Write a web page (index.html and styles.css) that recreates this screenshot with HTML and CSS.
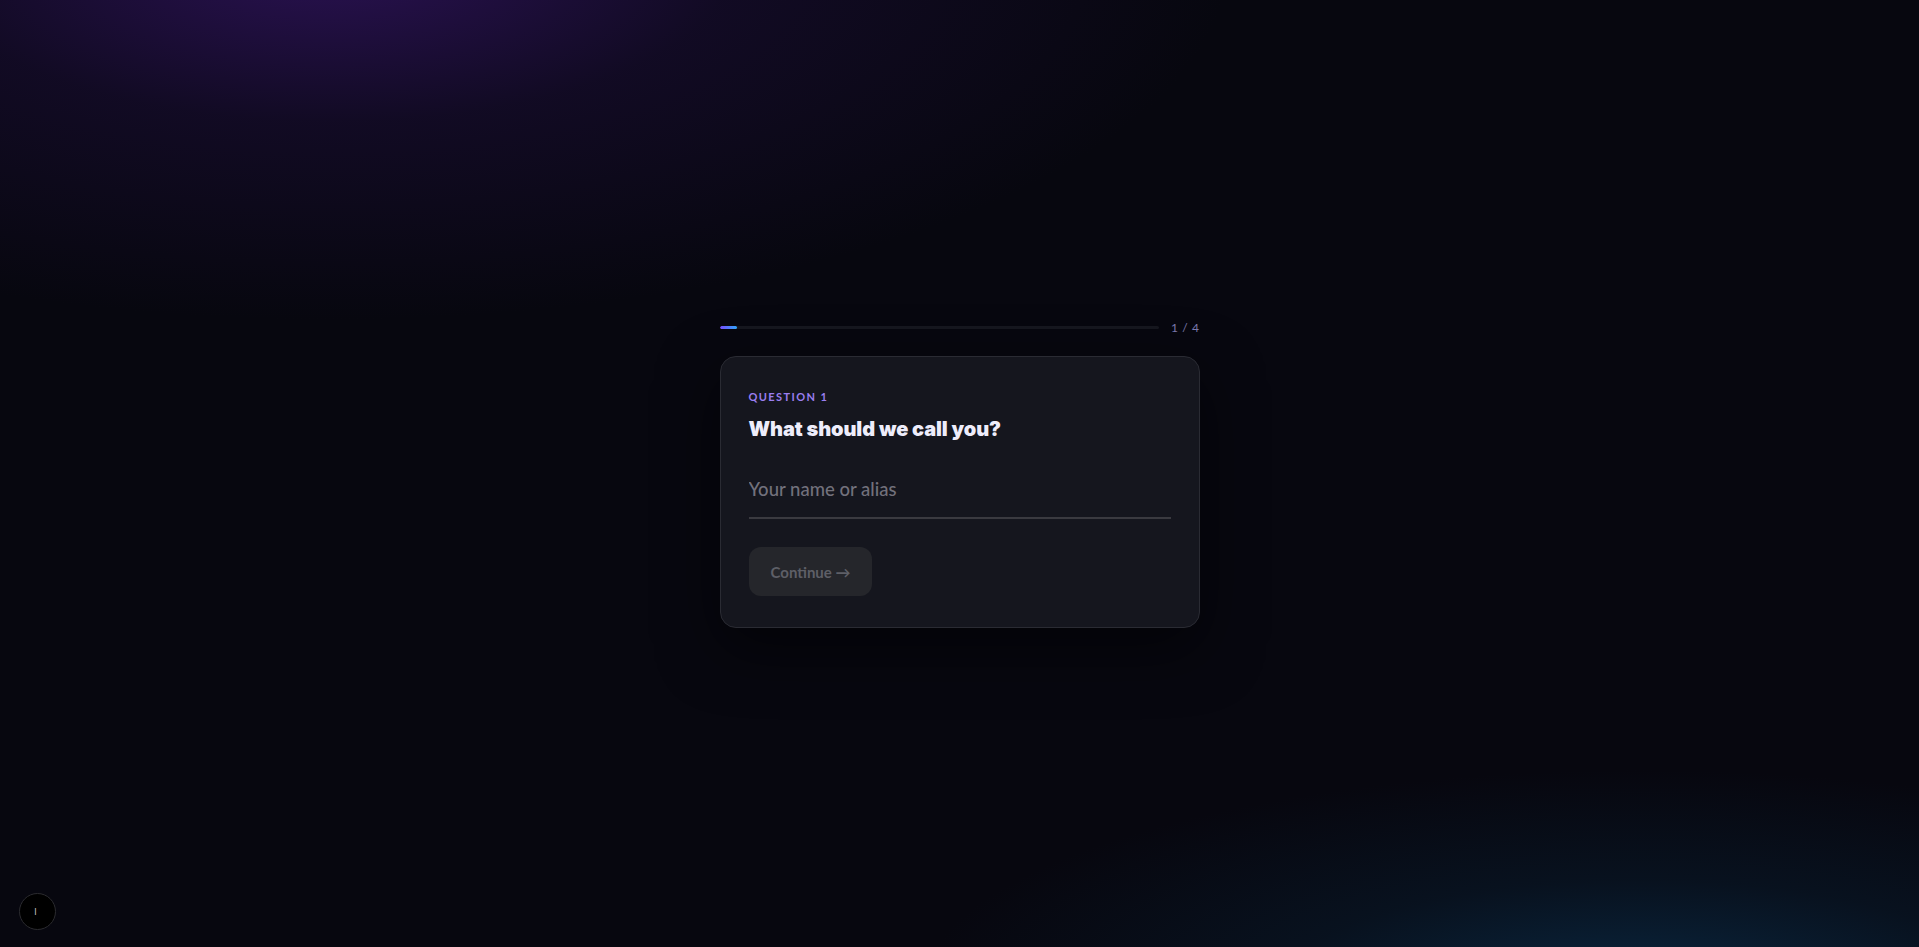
FILE: index.html
```html
<!DOCTYPE html>
<html lang="en">
<head>
<meta charset="utf-8">
<title>Question 1</title>
<link rel="stylesheet" href="styles.css">
</head>
<body>
<main class="stage">
  <div class="flow">
    <div class="progress">
      <div class="track"><div class="fill" style="width:4%"></div></div>
      <span class="count">1 / 4</span>
    </div>
    <section class="card">
      <div class="eyebrow">QUESTION 1</div>
      <h1 class="title">What should we call you?</h1>
      <input class="field" type="text" placeholder="Your name or alias">
      <button class="btn" disabled>Continue →</button>
    </section>
  </div>
</main>
<button class="dot" aria-label="toggle"><span class="dot-mark">I</span></button>
</body>
</html>
```
FILE: styles.css
```css
* { box-sizing: border-box; }
html, body { height: 100%; }
body {
  margin: 0;
  background-color: #07070f;
  background-image:
    radial-gradient(ellipse 900px 360px at 330px -40px, rgba(44,18,86,0.95), rgba(28,14,56,0.5) 45%, rgba(7,7,15,0) 100%),
    radial-gradient(ellipse 720px 220px at 1640px 990px, rgba(10,40,66,0.95), rgba(9,28,46,0.5) 50%, rgba(7,7,15,0) 100%);
  background-repeat: no-repeat;
  font-family: "Lato", "Noto Sans", sans-serif;
  color: #eceaf8;
  overflow: hidden;
  position: relative;
}
.stage {
  height: 100%;
  display: flex;
  align-items: center;
  justify-content: center;
}
.flow {
  width: 480px;
  display: flex;
  flex-direction: column;
  gap: 21px;
}
.progress {
  display: flex;
  align-items: center;
  gap: 12px;
  height: 16px;
}
.track {
  flex: 1;
  height: 3px;
  border-radius: 2px;
  background: #16171f;
  overflow: hidden;
}
.fill {
  height: 100%;
  background: linear-gradient(90deg, #7b4dff, #2fa8ff);
  border-radius: 2px;
}
.count {
  font-size: 12px;
  color: #7c7ab0;
  letter-spacing: 0.6px;
}
.card {
  background: #15161e;
  border: 1px solid #2a2b33;
  border-radius: 16px;
  padding: 32px 28px 31px 28px;
  box-shadow: 0 20px 60px rgba(0,0,0,0.55);
  display: flex;
  flex-direction: column;
  align-items: flex-start;
}
.eyebrow {
  font-size: 11px;
  font-weight: 700;
  letter-spacing: 1.4px;
  color: #9a7ef0;
  line-height: 16px;
}
.title {
  margin: 10px 0 0;
  font-family: "Inter", "Lato", sans-serif;
  font-size: 20px;
  font-weight: 900;
  letter-spacing: -0.1px;
  color: #eeedfb;
  line-height: 28px;
}
.field {
  margin-top: 34px;
  width: 100%;
  background: transparent;
  border: none;
  border-bottom: 2px solid #3a3a40;
  padding: 0 0 16px;
  font-family: inherit;
  font-size: 18.5px;
  font-weight: 500;
  color: #eceaf8;
  outline: none;
  line-height: 24px;
}
.field::placeholder { color: #72717c; }
.btn {
  margin-top: 28px;
  height: 49px;
  padding: 0 22px;
  border: none;
  border-radius: 12px;
  background: #25262b;
  color: #5e5f67;
  font-family: inherit;
  font-size: 15px;
  font-weight: 700;
}
.dot {
  position: absolute;
  left: 19px; top: 893px;
  width: 37px; height: 37px;
  border-radius: 50%;
  background: #000;
  border: 1.5px solid #2b2b2f;
  padding: 0;
  display: flex;
  align-items: center;
  justify-content: center;
}
.dot-mark {
  font-family: "DejaVu Sans", sans-serif;
  font-size: 8px;
  color: #c8c8c8;
  margin-left: -4px;
  margin-top: 1px;
}
```
